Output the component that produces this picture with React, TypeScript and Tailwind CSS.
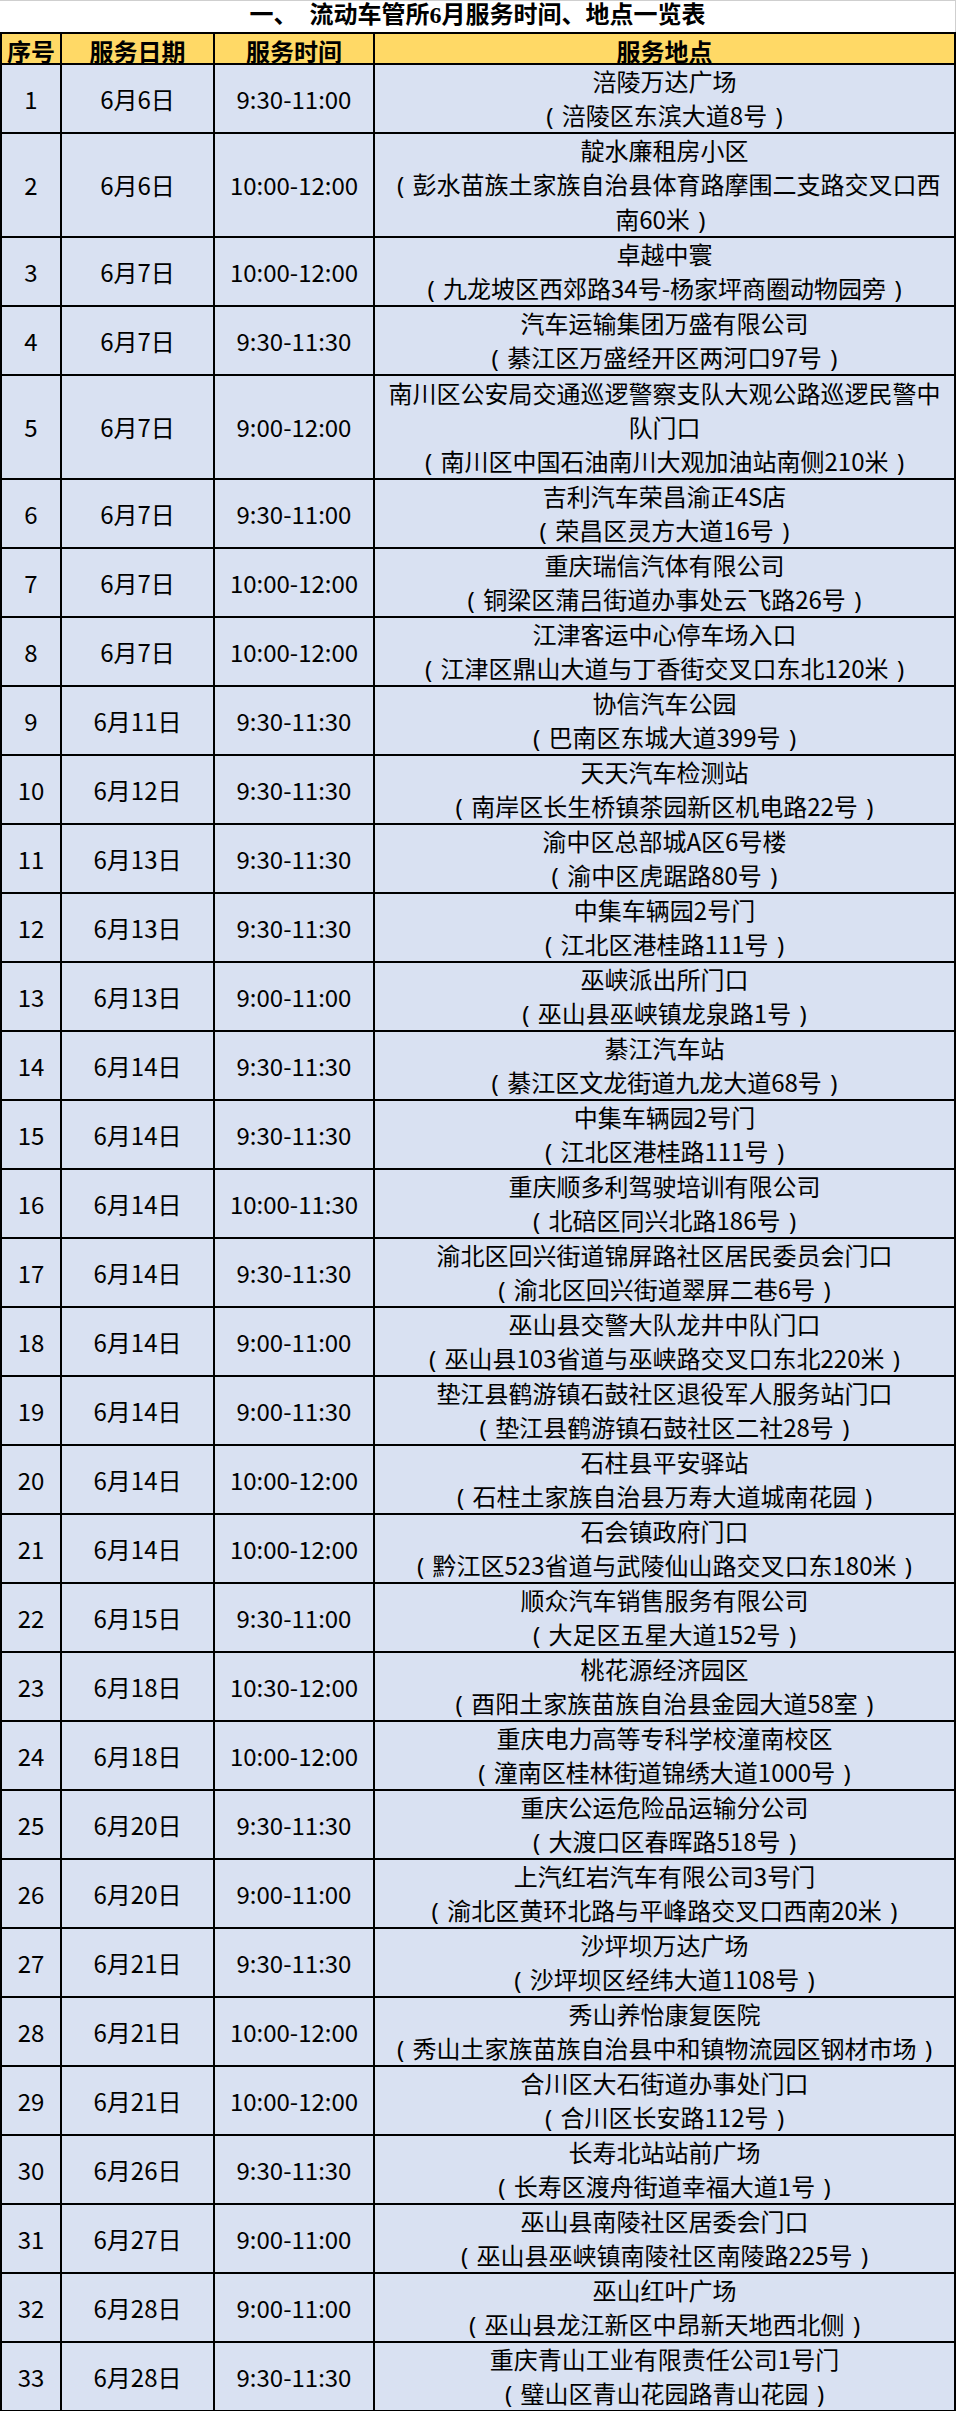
import React from "react";

type Row = { d: string; t: string; name: string; addr: string; tall?: boolean };

const rows: Row[] = [
  { d: "6月6日", t: "9:30-11:00", name: "涪陵万达广场", addr: "涪陵区东滨大道8号" },
  { d: "6月6日", t: "10:00-12:00", name: "靛水廉租房小区", addr: "彭水苗族土家族自治县体育路摩围二支路交叉口西南60米", tall: true },
  { d: "6月7日", t: "10:00-12:00", name: "卓越中寰", addr: "九龙坡区西郊路34号-杨家坪商圈动物园旁" },
  { d: "6月7日", t: "9:30-11:30", name: "汽车运输集团万盛有限公司", addr: "綦江区万盛经开区两河口97号" },
  { d: "6月7日", t: "9:00-12:00", name: "南川区公安局交通巡逻警察支队大观公路巡逻民警中队门口", addr: "南川区中国石油南川大观加油站南侧210米", tall: true },
  { d: "6月7日", t: "9:30-11:00", name: "吉利汽车荣昌渝正4S店", addr: "荣昌区灵方大道16号" },
  { d: "6月7日", t: "10:00-12:00", name: "重庆瑞信汽体有限公司", addr: "铜梁区蒲吕街道办事处云飞路26号" },
  { d: "6月7日", t: "10:00-12:00", name: "江津客运中心停车场入口", addr: "江津区鼎山大道与丁香街交叉口东北120米" },
  { d: "6月11日", t: "9:30-11:30", name: "协信汽车公园", addr: "巴南区东城大道399号" },
  { d: "6月12日", t: "9:30-11:30", name: "天天汽车检测站", addr: "南岸区长生桥镇茶园新区机电路22号" },
  { d: "6月13日", t: "9:30-11:30", name: "渝中区总部城A区6号楼", addr: "渝中区虎踞路80号" },
  { d: "6月13日", t: "9:30-11:30", name: "中集车辆园2号门", addr: "江北区港桂路111号" },
  { d: "6月13日", t: "9:00-11:00", name: "巫峡派出所门口", addr: "巫山县巫峡镇龙泉路1号" },
  { d: "6月14日", t: "9:30-11:30", name: "綦江汽车站", addr: "綦江区文龙街道九龙大道68号" },
  { d: "6月14日", t: "9:30-11:30", name: "中集车辆园2号门", addr: "江北区港桂路111号" },
  { d: "6月14日", t: "10:00-11:30", name: "重庆顺多利驾驶培训有限公司", addr: "北碚区同兴北路186号" },
  { d: "6月14日", t: "9:30-11:30", name: "渝北区回兴街道锦屏路社区居民委员会门口", addr: "渝北区回兴街道翠屏二巷6号" },
  { d: "6月14日", t: "9:00-11:00", name: "巫山县交警大队龙井中队门口", addr: "巫山县103省道与巫峡路交叉口东北220米" },
  { d: "6月14日", t: "9:00-11:30", name: "垫江县鹤游镇石鼓社区退役军人服务站门口", addr: "垫江县鹤游镇石鼓社区二社28号" },
  { d: "6月14日", t: "10:00-12:00", name: "石柱县平安驿站", addr: "石柱土家族自治县万寿大道城南花园" },
  { d: "6月14日", t: "10:00-12:00", name: "石会镇政府门口", addr: "黔江区523省道与武陵仙山路交叉口东180米" },
  { d: "6月15日", t: "9:30-11:00", name: "顺众汽车销售服务有限公司", addr: "大足区五星大道152号" },
  { d: "6月18日", t: "10:30-12:00", name: "桃花源经济园区", addr: "酉阳土家族苗族自治县金园大道58室" },
  { d: "6月18日", t: "10:00-12:00", name: "重庆电力高等专科学校潼南校区", addr: "潼南区桂林街道锦绣大道1000号" },
  { d: "6月20日", t: "9:30-11:30", name: "重庆公运危险品运输分公司", addr: "大渡口区春晖路518号" },
  { d: "6月20日", t: "9:00-11:00", name: "上汽红岩汽车有限公司3号门", addr: "渝北区黄环北路与平峰路交叉口西南20米" },
  { d: "6月21日", t: "9:30-11:30", name: "沙坪坝万达广场", addr: "沙坪坝区经纬大道1108号" },
  { d: "6月21日", t: "10:00-12:00", name: "秀山养怡康复医院", addr: "秀山土家族苗族自治县中和镇物流园区钢材市场" },
  { d: "6月21日", t: "10:00-12:00", name: "合川区大石街道办事处门口", addr: "合川区长安路112号" },
  { d: "6月26日", t: "9:30-11:30", name: "长寿北站站前广场", addr: "长寿区渡舟街道幸福大道1号" },
  { d: "6月27日", t: "9:00-11:00", name: "巫山县南陵社区居委会门口", addr: "巫山县巫峡镇南陵社区南陵路225号" },
  { d: "6月28日", t: "9:00-11:00", name: "巫山红叶广场", addr: "巫山县龙江新区中昂新天地西北侧" },
  { d: "6月28日", t: "9:30-11:30", name: "重庆青山工业有限责任公司1号门", addr: "璧山区青山花园路青山花园" },
];

const font = { fontFamily: '"Noto Sans CJK SC", "Noto Sans", sans-serif' };
const paren = { fontFamily: '"Noto Sans", "Liberation Sans", sans-serif' };

export default function App() {
  return (
    <div className="w-[956px] bg-white text-black" style={font}>
      <div
        className="h-[32px] border-t border-r border-[#cfcfcf] flex justify-center items-start pt-[1px] text-[24px] leading-[26px] font-bold whitespace-pre"
        style={{ fontFamily: '"Liberation Serif", "Noto Sans CJK SC", serif' }}
      >
        一、  流动车管所6月服务时间、地点一览表
      </div>
      <div className="grid grid-cols-[58px_151px_158px_579px] gap-[2px] p-[2px] bg-black">
        {["序号", "服务日期", "服务时间", "服务地点"].map((h) => (
          <div
            key={h}
            className="h-[29px] bg-[#ffd966] flex items-center justify-center pt-[4px] text-[24px] leading-[26px] font-bold whitespace-nowrap"
          >
            {h}
          </div>
        ))}
        {rows.map((r, i) => {
          const h = r.tall ? "h-[102px]" : "h-[67px]";
          return (
            <React.Fragment key={i}>
              <div className={`${h} bg-[#d9e1f2] flex items-center justify-center text-[24px] leading-[34px]`}>
                {i + 1}
              </div>
              <div className={`${h} bg-[#d9e1f2] flex items-center justify-center text-[24px] leading-[34px] whitespace-nowrap`}>
                {r.d}
              </div>
              <div className={`${h} bg-[#d9e1f2] flex items-center justify-center text-[24px] leading-[34px] whitespace-nowrap`}>
                {r.t}
              </div>
              <div className={`${h} bg-[#d9e1f2] flex flex-col items-center justify-center px-[4px] text-center text-[24px] leading-[34px]`}>
                <div>{r.name}</div>
                <div>
                  <span className="inline-block w-[24px] text-center" style={paren}>(</span>
                  {r.addr}
                  <span className="inline-block w-[24px] text-center" style={paren}>)</span>
                </div>
              </div>
            </React.Fragment>
          );
        })}
      </div>
    </div>
  );
}
